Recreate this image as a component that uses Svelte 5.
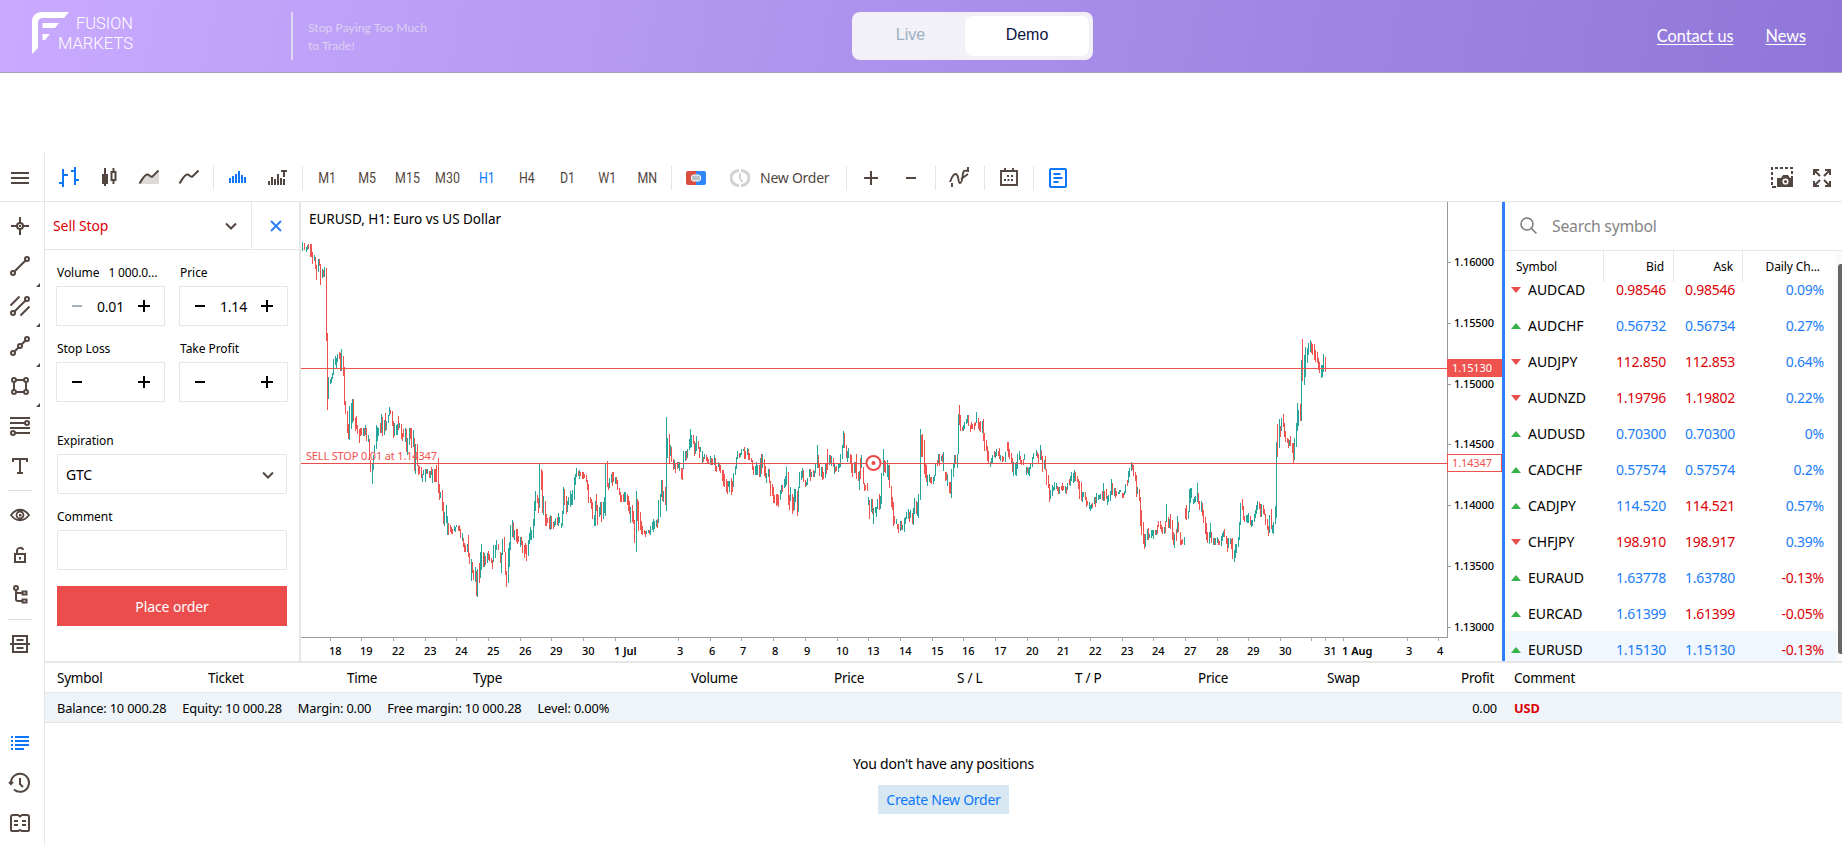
<script lang="ts">
    type Icon = { s?: string; f?: string; soft?: string; w?: number };

    // s = stroked path, f = filled path, soft = grey background shape
    const icons: Record<string, Icon> = {
        menu: { s: 'M3 7h18M3 12h18M3 17h18' },
        bars: { s: 'M6 3v18M2 17h4M6 9h5M18 1v18M14 5h4M18 14h4' },
        candles: { s: 'M8 2v18M16.5 2v3M16.5 15v3M14.5 6h4v8h-4z', f: 'M5 8h6v10H5z' },
        area: { s: 'M2.5 17.5c4-6 5-9 8-9 2 0 3 3 5 2l6-6', soft: 'M2 18 9 8.5l6 2L22 4v14z' },
        line: { s: 'M2.5 17.5c4-6 5-9 8-9 2 0 3 3 5 2l6-6' },
        volumes: { f: 'M3 12h2v5H3zM6 10h2v7H6zM9 8h2v9H9zM12 5h2v12h-2zM15 9h2v8h-2zM18 11h2v6h-2z' },
        ticks: { f: 'M2 15h2v4H2zM5 11h2v8H5zM8 13h2v6H8zM11 8h2v11h-2zM14 12h2v7h-2zM17 13h2v6h-2zM15 4h6v2h-2v5h-2V6h-2z' },
        plus: { s: 'M12 5v14M5 12h14' },
        minus: { s: 'M7 12h10' },
        indicators: { s: 'M2 16c2-6 5-10 7-7 2 2 1 8 3 8 3 0 2-10 4-12 1-1 3 0 5 0M4 21v-4M20 1v3M13 13l7-5', w: 1.9 },
        calendar: { s: 'M4 5h16v14H4zM8 2v4M16 2v4', f: 'M10 9h2v2h-2zM14 9h2v2h-2zM7 13h2v2H7zM10.500 13h2v2h-2zM14 13h2v2h-2z', w: 1.900 },
        list: { s: 'M5 3h14a1 1 0 0 1 1 1v16a1 1 0 0 1-1 1H5a1 1 0 0 1-1-1V4a1 1 0 0 1 1-1zM7.5 8h7M7.5 12h9M7.5 16h5' },
        expand: { s: 'M4 9V4h5M4 4l6 6M15 4h5v5M20 4l-6 6M4 15v5h5M4 20l6-6M20 15v5h-5M20 20l-6-6' },
        cross: { s: 'M12 3v6M12 15v6M3 12h6M15 12h6M15 12a3 3 0 1 1-6 0 3 3 0 0 1 6 0z', f: 'M11 11h2v2h-2z' },
        trend: { s: 'M6.5 17.5l11-11M21 5a2 2 0 1 1-4 0 2 2 0 0 1 4 0zM7 19a2 2 0 1 1-4 0 2 2 0 0 1 4 0z' },
        channel: { s: 'M6.5 17.5l11-11M21 5a2 2 0 1 1-4 0 2 2 0 0 1 4 0zM7 19a2 2 0 1 1-4 0 2 2 0 0 1 4 0zM2.5 11.5l9-9M12.5 21.5l9-9' },
        poly: { s: 'M6.5 17.5l4-4M13.5 10.5l4-4M21 5a2 2 0 1 1-4 0 2 2 0 0 1 4 0zM7 19a2 2 0 1 1-4 0 2 2 0 0 1 4 0zM14 12a2 2 0 1 1-4 0 2 2 0 0 1 4 0z' },
        shape: { s: 'M8 6h8M8 18h8M6 8v8M18 8v8M8 6a2 2 0 1 1-4 0 2 2 0 0 1 4 0zM20 6a2 2 0 1 1-4 0 2 2 0 0 1 4 0zM8 18a2 2 0 1 1-4 0 2 2 0 0 1 4 0zM20 18a2 2 0 1 1-4 0 2 2 0 0 1 4 0z' },
        fibo: { s: 'M2 4h20M2 9h15M2 14h20M7 19h15M21 9a2 2 0 1 1-4 0 2 2 0 0 1 4 0zM7 19a2 2 0 1 1-4 0 2 2 0 0 1 4 0z' },
        text: { s: 'M5 8V5h14v3M12 5v14M9 19h6' },
        eye: { s: 'M3 12c5-7 13-7 18 0-5 7-13 7-18 0zM15.5 12a3.5 3.5 0 1 1-7 0 3.5 3.5 0 0 1 7 0z', f: 'M11 11h2.500v2.500H11z', w: 1.8 },
        lock: { s: 'M7 11h10v8H7zM9 11V8c0-4 6-4 6-1', f: 'M11 14h2v2.500h-2z' },
        tree: { s: 'M8 7v9c0 2 1 2 2 2h4M8 10h7M10 5a2 2 0 1 1-4 0 2 2 0 0 1 4 0zM14.500 8.500h4v3h-4zM14.500 16.500h4v3h-4z' },
        template: { s: 'M5 11V4h14v7M2 12h20M5 13v7h14v-7M8.500 8h7M8.500 16h7' },
        positions: { f: 'M3 5h2v2H3zM7 5h14v2H7zM3 9h2v2H3zM7 9h14v2H7zM3 13h2v2H3zM7 13h14v2H7zM3 17h2v2H3zM7 17h9v2H7z' },
        history: { s: 'M3 12a9 9 0 1 1 3 6.500M1 11l2 2 2-2M12 7v6l3 3' },
        book: { s: 'M3 6a2 2 0 0 1 2-2h5l2 1.500L14 4h5a2 2 0 0 1 2 2v13a1 1 0 0 1-1 1h-6l-2-1-2 1H4a1 1 0 0 1-1-1zM6 10h4M6 14h4M14 10h4M14 14h4' }
    };

    const chartTypes = ['bars', 'candles', 'area', 'line'];
    const periods = ['M1', 'M5', 'M15', 'M30', 'H1', 'H4', 'D1', 'W1', 'MN'];
    const drawTools = ['cross', 'trend', 'channel', 'poly', 'shape', 'fibo', 'text'];
    const withMenu = ['trend', 'channel', 'poly', 'shape'];

    const symbols = [
        { name: 'AUDCAD', up: false, bid: '0.98546', ask: '0.98546', bidUp: false, askUp: false, change: '0.09%' },
        { name: 'AUDCHF', up: true, bid: '0.56732', ask: '0.56734', bidUp: true, askUp: true, change: '0.27%' },
        { name: 'AUDJPY', up: false, bid: '112.850', ask: '112.853', bidUp: false, askUp: false, change: '0.64%' },
        { name: 'AUDNZD', up: false, bid: '1.19796', ask: '1.19802', bidUp: false, askUp: false, change: '0.22%' },
        { name: 'AUDUSD', up: true, bid: '0.70300', ask: '0.70300', bidUp: true, askUp: true, change: '0%' },
        { name: 'CADCHF', up: true, bid: '0.57574', ask: '0.57574', bidUp: true, askUp: true, change: '0.2%' },
        { name: 'CADJPY', up: true, bid: '114.520', ask: '114.521', bidUp: true, askUp: false, change: '0.57%' },
        { name: 'CHFJPY', up: false, bid: '198.910', ask: '198.917', bidUp: false, askUp: false, change: '0.39%' },
        { name: 'EURAUD', up: true, bid: '1.63778', ask: '1.63780', bidUp: true, askUp: true, change: '-0.13%' },
        { name: 'EURCAD', up: true, bid: '1.61399', ask: '1.61399', bidUp: true, askUp: false, change: '-0.05%' },
        { name: 'EURUSD', up: true, bid: '1.15130', ask: '1.15130', bidUp: true, askUp: true, change: '-0.13%' }
    ];

    const columns = ['Symbol', 'Ticket', 'Time', 'Type', 'Volume', 'Price', 'S / L', 'T / P', 'Price', 'Swap', 'Profit', 'Comment'];
    const summary = ['Balance: 10 000.28', 'Equity: 10 000.28', 'Margin: 0.00', 'Free margin: 10 000.28', 'Level: 0.00%'];

    const prices = ['1.16000', '1.15500', '1.15000', '1.14500', '1.14000', '1.13500', '1.13000'];

    const days: [number, string][] = [
        [29, '18'], [60, '19'], [92, '22'], [124, '23'], [155, '24'], [187, '25'], [219, '26'], [250, '29'], [282, '30'], [314, '1 Jul'],
        [377, '3'], [409, '6'], [440, '7'], [472, '8'], [504, '9'], [536, '10'], [567, '13'], [599, '14'], [631, '15'], [662, '16'],
        [694, '17'], [726, '20'], [757, '21'], [789, '22'], [821, '23'], [852, '24'], [884, '27'], [916, '28'], [947, '29'], [979, '30'],
        [1010, ''], [1024, '31'], [1042, '1 Aug'], [1106, '3'], [1137, '4']
    ];

    // Hourly bars: direction + x,high,low in thirds of a pixel from the run's origin
    const runs = [
        {
            x: -1, y: -2,
            bars: 'g7,126,153 r12,130,152 g19,140,155 g22,136,150 r25,132,146 r31,132,171 r34,132,171 r37,156,192 g43,165,183 r46,170,205 r49,195,240 g55,178,218 r58,178,200 r61,192,255 g67,207,234 r70,210,232 g73,201,231 r79,204,423 r82,399,630 g85,531,597 g91,537,552 g94,531,549 g97,519,537 g100,477,525 g106,468,495 g109,474,504 g112,462,486 r118,456,477 r121,459,513 g124,447,513 r130,468,528 r133,501,615 r136,603,642 r142,633,699 r145,672,717 g148,618,720 g154,609,687 g157,597,669 r160,597,663 r166,654,693 r169,648,688 r172,675,702 r178,687,729 r181,684,708 r184,684,705 g190,684,708 r193,684,708 g196,675,705 r199,684,723 g205,705,726 r208,717,780 r211,780,816 g217,790,852 g220,765,810 g223,735,762 g229,675,747 g232,681,723 g235,684,708 r241,669,699 g244,642,699 r247,651,708 g253,660,705 r256,639,693 g259,663,690 g265,645,669 g268,621,648 r271,630,642 r277,633,678 r280,663,714 g283,669,708 g289,675,705 g292,672,705 r295,648,690 g298,669,684 r304,672,717 r307,699,723 r310,687,711 g316,684,726 r319,687,756 g322,714,765 g328,684,735 r331,684,717 r334,684,744 g340,690,741 r343,714,813 g346,732,822 r352,732,798 r355,795,825 r358,798,822 r364,801,834 g367,822,846 g370,810,825 g376,807,846 r379,807,822 g382,807,822 r388,813,834 g391,813,834 r394,801,825 g397,807,849 r403,807,846 r406,807,846 r409,795,846 r415,774,880 r418,852,900 g421,876,894 r427,870,933 r430,906,972 g433,936,978 g439,915,969 g442,948,1005 r445,969,1005 r451,975,996 r454,981,1002 r457,987,1002 g463,978,993 g466,981,996 g469,975,981 r475,978,993 r478,975,993 r481,987,1014 g487,999,1023 r490,1014,1041 r493,1029,1056 r496,1035,1056 g502,1032,1056 r505,1005,1071 r508,1059,1092 g514,1077,1143 r517,1086,1119 r520,1110,1140 g526,1101,1146 r529,1113,1188 g532,1107,1191 r538,1089,1149 g541,1056,1134 g544,1032,1110 r550,1056,1101 g553,1059,1101 r556,1068,1095 g562,1059,1089 r565,1053,1080 r568,1062,1083 r574,1074,1089 r577,1080,1107 g580,1035,1086 g586,1035,1074 g589,1020,1050 r595,1032,1050 r601,1056,1089 g604,1059,1119 g607,1017,1065 r613,1011,1056 r616,1056,1125 r619,1113,1161 g625,1044,1149 g628,1026,1101 g631,975,1050 g637,960,1011 r640,966,1014 g643,990,1020 r649,987,1026 r652,987,1032 r655,1008,1026 g661,1011,1041 r664,1011,1035 r667,1023,1059 r673,1035,1074 r676,1029,1062 r679,1035,1083 g685,1020,1068 g688,999,1032 g691,981,1020 g694,990,1020 g700,957,1014 g703,903,978 g706,873,933 r712,885,909 r715,894,939 g718,792,924 r724,807,870 r727,813,939 g730,888,945 r736,903,978 r739,942,978 r742,954,969 r748,951,987 g751,945,990 r754,948,987 r760,966,987 g763,963,981 g766,954,975 r772,951,975 g775,939,978 g778,951,969 g784,969,984 g787,933,978 g790,861,942 r793,867,915 r799,888,942 g802,903,936 g805,891,915 g811,873,921 g814,882,915 g817,870,915 g823,831,900 g826,822,855 g829,804,831 r835,813,828 g838,810,837 r841,816,828 r847,816,837 r850,816,837 r853,822,834 r859,825,846 r862,840,870 r865,852,909 r871,891,909 r874,897,927 r877,906,957 g883,945,978 g886,903,978 r889,882,933 r892,915,975 g898,921,951 g901,906,945 r904,906,966 g910,906,957 g913,891,939 g916,790,948 r922,783,861 r925,849,870 g928,834,864 g934,822,849 r937,816,858 r940,816,846 g946,831,852 r949,831,852 r952,840,870 r958,864,885 r961,876,906 r964,885,906 r970,882,906 g973,876,906 g976,876,906 r982,882,915 r985,888,933 r988,903,942 g991,921,969 r997,915,966 r1000,933,972 r1003,960,1029 g1009,873,1056 r1012,897,963 r1015,903,993 r1021,936,990 r1024,963,1002 r1027,978,1005 r1033,990,1002 r1036,993,1011 g1039,993,1002 g1045,990,999 r1048,990,1002 g1051,978,1005 g1057,966,990 g1060,957,996 g1063,963,987 g1069,960,981 r1072,957,984 g1075,900,969 g1081,882,951 g1084,840,891 r1087,840,903 g1090,873,906 r1096,861,915 g1099,651,933'
        },
        {
            x: 359, y: 178,
            bars: 'g22,175,235 r28,162,250 g31,195,228 r34,201,246 r40,237,270 g43,240,267 r46,249,279 r52,246,267 g55,246,264 g58,246,273 r64,264,297 r67,264,300 g70,213,267 g76,213,243 r79,213,240 g82,207,234 g88,177,210 g91,147,204 g94,165,201 r100,165,192 r103,183,228 g106,189,222 g109,168,213 r115,183,207 r118,201,234 g121,201,216 g127,213,249 r130,231,246 g133,222,237 r139,225,243 r142,231,249 r145,237,252 g151,228,255 r154,234,255 r157,237,255 g163,225,255 r166,234,273 r169,258,276 g175,246,261 r178,249,273 r181,255,279 r187,270,303 r190,270,318 r193,282,321 r199,297,336 r202,303,342 g205,303,321 g208,303,336 r214,294,345 r217,303,336 g220,279,321 g226,258,285 g229,231,267 g232,213,237 r238,219,234 g241,219,231 g244,207,225 g250,207,213 r253,201,237 r256,213,237 g262,204,225 r265,207,240 r268,219,240 r274,234,246 r277,240,270 r280,258,285 g286,258,285 g289,246,285 g292,255,285 r298,255,291 g301,234,291 r304,222,282 g307,222,264 r313,237,288 r316,258,294 g319,279,309 g325,267,291 r328,267,309 r331,303,348 r337,312,348 r340,321,369 r343,345,369 r349,342,378 r352,342,375 r355,345,381 g361,330,360 g364,315,342 r367,315,336 g373,297,324 g376,288,321 g379,261,315 r385,276,375 r388,345,390 g391,321,363 r397,342,402 r400,351,393 g403,327,390 g406,327,366 r412,333,408 g415,321,396 g418,276,324 g424,273,300 g427,264,294 r430,270,306 r436,300,321 g439,306,318 g442,294,315 g448,267,291 r451,267,303 g454,276,291 r460,270,291 g463,273,291 g466,252,279 g472,195,264 r475,225,264 r478,249,288 g484,261,291 r487,261,300 r490,276,297 g496,252,294 r499,249,282 r502,207,270 g508,225,255 r511,225,252 g514,228,258 r520,234,261 g523,252,282 r526,261,276 r529,258,273 g535,252,276 g538,249,264 g541,222,261 g547,195,237 g550,153,204 r553,159,204 r559,195,234 g562,213,246 g565,204,234 r571,222,249 r574,225,279 r577,249,291 g583,246,279 r586,246,279 r589,222,297 r595,276,303 g598,273,330 r601,234,297 g604,225,264 r610,261,312 r613,309,333 r616,315,330 r622,309,333 g625,351,375 r628,360,417 g634,357,396 r637,357,402 g640,384,432 g646,381,399 g649,381,411 g652,357,387 r658,342,390 g661,348,387 g664,279,372 g670,207,288 r673,240,276 r676,243,279 g682,240,291 g685,255,300 r688,255,324 r694,318,381 r697,351,390 r700,366,438 r703,408,432 g709,417,432 r712,432,447 r715,432,459 g721,423,453 r724,423,450 g727,435,450 g733,414,456 g736,411,432 g739,396,417 g745,387,417 r748,396,426 g751,390,414 r757,399,432 g760,384,435 g763,354,402 r769,363,402 g772,366,408 g775,342,414 g781,147,360 r784,165,231 r787,162,231 r793,180,282 r796,252,294 r799,255,306 g802,285,318 g808,282,306 r811,291,309 r814,291,312 g820,291,312 g823,285,303 g826,252,288 r832,240,258 g835,222,252 r838,222,258 g844,228,243 r847,222,246 g850,216,273 r856,276,303 r859,276,300 g862,282,318 r868,306,339 r871,306,342 g874,267,354 g880,252,291 g883,225,264 r886,225,252 g892,222,264 g895,102,222 r898,75,135 r901,105,153 r907,141,153 g910,135,153 g913,126,147 g919,117,132 g922,105,129 r925,105,138 r931,135,156 r934,126,147 r937,132,147 r943,129,150 r946,126,138 g949,96,129 r955,114,147 r958,126,153 r961,123,156 g967,123,159 r970,117,183 r973,159,213 r979,180,213 r982,198,243 r985,213,249 g991,246,261 g994,234,252 g997,225,249 r1003,213,231 g1006,216,234 g1009,207,228 r1015,213,228 r1018,204,237 g1021,225,243 r1027,228,246 r1030,231,243 g1036,216,246 r1042,186,213 r1045,186,231 r1048,207,237 r1054,219,252 r1057,234,276 g1060,246,288 g1066,252,285 g1069,246,288 g1072,222,267 g1078,213,240 r1081,228,249 r1084,240,255 r1090,237,255 g1093,222,240 g1099,261,285 r1102,261,279 g1105,264,285 g1108,261,288 g1111,249,267 g1117,231,261 g1120,219,237 g1129,210,228 r1132,216,234 r1135,222,249 g1141,195,240'
        },
        {
            x: 739, y: 178,
            bars: 'r4,210,240 r7,228,276 g13,240,267 r16,228,270 r19,267,315 r25,285,324 r28,312,366 g31,330,357 g37,315,348 g40,321,333 g43,306,330 g49,309,327 r52,318,333 r55,321,342 g58,321,342 r64,318,330 r67,309,333 r70,318,330 g76,318,339 r79,321,342 g82,309,330 r88,297,315 g91,288,318 g94,276,303 g100,279,309 g103,270,306 r106,276,303 r112,288,306 r115,297,327 r118,303,357 r124,306,363 g127,336,366 g130,336,351 r136,336,360 r139,351,381 r142,363,375 g148,366,387 g151,375,393 g154,372,387 r157,369,384 g163,351,372 r166,351,381 g169,339,369 g175,345,360 g178,345,357 g181,342,357 r187,333,360 g190,309,363 r193,333,363 r199,327,357 g202,348,375 g205,345,366 g211,333,363 g214,297,345 r217,309,345 g223,324,348 r226,324,354 r229,333,348 g235,336,342 g238,330,342 g241,330,336 r247,339,354 r250,339,354 g253,333,345 g256,312,339 r262,300,318 g265,273,309 g268,264,291 g274,247,273 r277,249,270 r280,255,288 r286,276,303 r289,285,351 g292,321,342 r298,327,363 r301,351,438 r304,390,465 r310,426,492 r313,462,507 g316,462,500 g322,447,480 r325,444,480 g328,462,474 g334,450,474 g337,450,468 g340,450,477 r346,450,465 g349,450,465 r352,435,462 r355,423,441 r361,423,447 r364,435,456 r367,441,462 g373,441,462 r376,423,459 g379,372,426 r385,411,444 g388,417,444 r391,402,447 r397,420,480 r400,456,495 g403,462,504 r409,447,483 g412,408,459 r415,426,456 r421,456,495 r424,480,495 r427,477,492 g433,471,495 r436,384,417 r439,375,420 g445,393,417 g448,327,396 g451,324,369 g454,324,354 g460,357,372 g463,351,369 g466,348,366 g472,309,366 r475,339,372 r478,363,390 g484,363,396 r487,369,408 r490,390,429 r496,411,462 r499,429,480 r502,456,489 g508,456,492 g511,429,474 r514,456,489 g520,474,495 r523,474,495 g526,474,495 g532,471,489 r535,477,495 r538,483,495 g544,468,498 g547,459,483 g550,453,471 r553,447,471 r559,468,492 r562,474,516 g565,474,504 g571,474,492 r574,477,507 r577,474,537 g583,510,546 g586,492,534 g589,492,519 g595,471,501 g598,426,480 g601,369,435 r607,357,390 r610,378,420 r613,408,426 g619,405,426 g622,405,429 g625,399,429 r631,408,435 g634,420,441 g637,420,438 g643,402,426 g646,390,414 g649,375,402 g652,363,390 r658,366,387 r661,372,411 g664,372,411 r670,375,402 r673,387,405 r676,402,435 r682,417,450 r685,438,468 g688,405,459 r694,387,447 g697,435,459 g700,426,462 g706,378,432 g709,186,414 r712,132,231 g718,117,204 r721,138,171 g724,114,153 r730,102,141 r733,129,171 r736,153,186 r742,174,189 r745,177,204 g748,180,198 r751,168,198 r757,189,219 r760,189,249 g763,174,240 g769,129,201 g772,69,153 g775,90,138 r781,72,123 g784,-60,123 r787,-124,3 g793,-75,14 g796,-100,-10 g802,-95,-50 g805,-112,-75 g811,-120,-85 r814,-114,-82 r817,-108,-75 r823,-108,-60 r826,-90,-54 r832,-84,-50 r835,-66,-30 r838,-54,-20 g844,-45,-6 g847,-45,-9 g850,-78,-24 r856,-70,-24'
        }
    ];

    const candles = runs.flatMap((run) =>
        run.bars.split(' ').map((bar) => {
            const [x, high, low] = bar.slice(1).split(',').map(Number);
            return {
                up: bar[0] === 'g',
                x: run.x + Math.floor(x / 3),
                y: run.y + Math.round(high / 3),
                h: Math.max(1, Math.round((low - high) / 3))
            };
        })
    );
</script>

{#snippet icon(name: string)}
    {@const i = icons[name]}
    <svg class="icon" viewBox="0 0 24 24" width="24" height="24" aria-hidden="true">
        {#if i.soft}<path d={i.soft} fill="#dcdbda" />{/if}
        {#if i.s}<path d={i.s} fill="none" stroke="currentColor" stroke-width={i.w ?? 2} />{/if}
        {#if i.f}<path d={i.f} fill="currentColor" />{/if}
    </svg>
{/snippet}

{#snippet stepper(value: string, disabled: boolean)}
    <div class="stepper">
        <svg class:disabled viewBox="0 0 12 12" width="12" height="12"><path d="M1 6h10" /></svg>
        <span>{value}</span>
        <svg viewBox="0 0 12 12" width="12" height="12"><path d="M0 6h12M6 0v12" /></svg>
    </div>
{/snippet}

{#snippet chevron()}
    <svg class="chevron" viewBox="0 0 12 8" width="12" height="8"><path d="M1 1.500l5 5 5-5" /></svg>
{/snippet}

<div class="app">
    <header>
        <svg class="logo" viewBox="0 0 110 48" width="110" height="48">
            <path d="M0 42V9a9 9 0 0 1 9-9h28l-5 6H11q-5 0-5 5v25z" />
            <path d="M10.500 11H27l-4 5H10.500zM10.500 22H18l-5 6h-2.500z" />
            <text x="44" y="17" textLength="57" lengthAdjust="spacingAndGlyphs">FUSION</text>
            <text x="26" y="37" textLength="75" lengthAdjust="spacingAndGlyphs">MARKETS</text>
        </svg>
        <p class="tagline">Stop Paying Too Much<br />to Trade!</p>
        <div class="switch">
            <span>Live</span>
            <span class="on">Demo</span>
        </div>
        <nav>
            <a href="#contact">Contact us</a>
            <a href="#news">News</a>
        </nav>
    </header>

    <div class="toolbar">
        <div class="burger">{@render icon('menu')}</div>
        <div class="tools">
            {#each chartTypes as t}
                <div class="tool" class:active={t === 'bars'}>{@render icon(t)}</div>
            {/each}
            <i class="sep"></i>
            <div class="tool active">{@render icon('volumes')}</div>
            <div class="tool">{@render icon('ticks')}</div>
            <i class="sep"></i>
            {#each periods as p}
                <div class="tool period" class:active={p === 'H1'}><span>{p}</span></div>
            {/each}
            <i class="sep"></i>
            <div class="tool">
                <svg viewBox="0 0 20 14" width="20" height="14">
                    <path d="M2 0h8v14H2a2 2 0 0 1-2-2V2a2 2 0 0 1 2-2z" fill="#db4f43" />
                    <path d="M10 0h8a2 2 0 0 1 2 2v10a2 2 0 0 1-2 2h-8z" fill="#2f86f6" />
                    <rect x="5.500" y="4" width="9" height="6" rx="2" fill="#b5c3cb" stroke="#fff" />
                </svg>
            </div>
            <div class="new-order">
                <svg viewBox="0 0 20 18" width="20" height="18">
                    <path d="M9 1.500a8 7.500 0 0 0 0 15M11 1.500a8 7.500 0 0 1 0 15" />
                    <path class="hands" d="M10 4.500v5l2.500 3.500" />
                </svg>
                <span>New Order</span>
            </div>
            <i class="sep"></i>
            <div class="tool">{@render icon('plus')}</div>
            <div class="tool">{@render icon('minus')}</div>
            <i class="sep"></i>
            <div class="tool">{@render icon('indicators')}</div>
            <i class="sep"></i>
            <div class="tool">{@render icon('calendar')}</div>
            <i class="sep"></i>
            <div class="tool active">{@render icon('list')}</div>
        </div>
        <div class="tools right">
            <div class="tool">
                <svg viewBox="0 0 24 24" width="24" height="24">
                    <path d="M2 19V2h20v10" fill="none" stroke="currentColor" stroke-width="2" stroke-dasharray="3 2" />
                    <path d="M2 21h4" stroke="currentColor" stroke-width="2" />
                    <path d="M7 12h4l2-3h5l2 3h3v9H7z" fill="currentColor" />
                    <circle cx="15.500" cy="15.500" r="2.300" fill="none" stroke="#fff" stroke-width="1.600" />
                </svg>
            </div>
            <div class="tool">{@render icon('expand')}</div>
        </div>
    </div>

    <div class="terminal">
        <aside class="side">
            {#each drawTools as t}
                <div class="tool" class:more={withMenu.includes(t)}>{@render icon(t)}</div>
            {/each}
            <i class="rule"></i>
            <div class="tool">{@render icon('eye')}</div>
            <div class="tool">{@render icon('lock')}</div>
            <div class="tool">{@render icon('tree')}</div>
            <i class="rule"></i>
            <div class="tool">{@render icon('template')}</div>
            <div class="bottom">
                <div class="tool active">{@render icon('positions')}</div>
                <div class="tool">{@render icon('history')}</div>
                <div class="tool">{@render icon('book')}</div>
            </div>
        </aside>

        <div class="main">
            <div class="upper">
                <section class="order">
                    <div class="order-head">
                        <div class="order-type"><span>Sell Stop</span>{@render chevron()}</div>
                        <div class="close">
                            <svg viewBox="0 0 12 12" width="12" height="12"><path d="M1 1l10 10M11 1L1 11" /></svg>
                        </div>
                    </div>
                    <div class="form">
                        <div class="pair">
                            <div class="field">
                                <div class="label"><span>Volume</span><span class="lots">1 000.0…</span></div>
                                {@render stepper('0.01', true)}
                            </div>
                            <div class="field">
                                <div class="label">Price</div>
                                {@render stepper('1.14', false)}
                            </div>
                        </div>
                        <div class="pair second">
                            <div class="field">
                                <div class="label">Stop Loss</div>
                                {@render stepper('', false)}
                            </div>
                            <div class="field">
                                <div class="label">Take Profit</div>
                                {@render stepper('', false)}
                            </div>
                        </div>
                        <div class="wide expiration">
                            <div class="label">Expiration</div>
                            <div class="box"><span>GTC</span>{@render chevron()}</div>
                        </div>
                        <div class="wide comment">
                            <div class="label">Comment</div>
                            <div class="box"></div>
                        </div>
                        <button class="place">Place order</button>
                    </div>
                </section>

                <svg class="chart" viewBox="0 0 1201 459" width="1201" height="459">
                    <g shape-rendering="crispEdges">
                        {#each candles as c}
                            <rect x={c.x} y={c.y} width="1" height={c.h} fill={c.up ? '#26a69a' : '#ef5350'} />
                        {/each}
                        <rect x="0" y="166" width="1146" height="1" fill="#ef5350" />
                        <rect x="0" y="261" width="1146" height="1" fill="#e94b4b" />
                        <rect x="1146" y="0" width="1" height="436" fill="#999" />
                        <rect x="0" y="435" width="1147" height="1" fill="#999" />
                        {#each days as [x]}
                            <rect {x} y="436" width="1" height="3" fill="#aaa" />
                        {/each}
                        {#each prices as _, i}
                            <rect x="1147" y={60 + Math.round(i * 60.8)} width="3" height="1" fill="#999" />
                        {/each}
                    </g>
                    <text class="title" x="8" y="22" textLength="192">EURUSD, H1: Euro vs US Dollar</text>
                    <text class="order-label" x="5" y="258" textLength="131">SELL STOP 0.01 at 1.14347</text>
                    <circle cx="572.500" cy="261" r="7" fill="#fff" stroke="#e94b4b" stroke-width="2" />
                    <circle cx="572.500" cy="261" r="2" fill="#e94b4b" />
                    {#each prices as p, i}
                        <text class="tick" x="1153" y={64 + Math.round(i * 60.8)} textLength="40">{p}</text>
                    {/each}
                    {#each days as [x, label]}
                        <text class="tick" class:month={label.length > 2} x={x - 1} y="453">{label}</text>
                    {/each}
                    <rect x="1146" y="157" width="55" height="18" fill="#ef5350" />
                    <text class="badge" x="1151" y="170" textLength="40">1.15130</text>
                    <rect x="1146.500" y="252.500" width="54" height="17" fill="#fff" stroke="#ef5350" />
                    <text class="badge hollow" x="1151" y="265" textLength="40">1.14347</text>
                </svg>

                <section class="market">
                    <div class="search">
                        <svg viewBox="0 0 18 18" width="18" height="18"><circle cx="7" cy="7" r="6" /><path d="M11.500 11.500l5 5" /></svg>
                        <span>Search symbol</span>
                    </div>
                    <div class="quotes">
                        <div class="table">
                            <div class="q-head">
                                <span>Symbol</span><span>Bid</span><span>Ask</span><span>Daily Ch...</span>
                            </div>
                            <div class="q-rows">
                                {#each symbols as s}
                                    <div class="q-row" class:selected={s.name === 'EURUSD'}>
                                        <span class="arrow" class:down={!s.up}></span>
                                        <span class="name">{s.name}</span>
                                        <span class="num" class:red={!s.bidUp}>{s.bid}</span>
                                        <span class="num" class:red={!s.askUp}>{s.ask}</span>
                                        <span class="num" class:red={s.change.startsWith('-')}>{s.change}</span>
                                    </div>
                                {/each}
                            </div>
                        </div>
                        <div class="track"><div class="thumb"></div></div>
                    </div>
                </section>
            </div>

            <section class="positions">
                <div class="p-head">
                    {#each columns as c}<span>{c}</span>{/each}
                </div>
                <div class="p-summary">
                    <div class="sums">{#each summary as s}<span>{s}</span>{/each}</div>
                    <span class="profit">0.00</span>
                    <b>USD</b>
                </div>
                <div class="empty">
                    <p>You don't have any positions</p>
                    <button>Create New Order</button>
                </div>
            </section>
        </div>
    </div>
</div>

<style>
    :global(body){ margin: 0; background: #fff; }
    .app{
        --line:#e6e6e6;
        --icon:#534641;
        --blue:#0d76fb;
        --red:#dc0005;
        width: 1842px; height: 845px; overflow: hidden;
        display: flex; flex-direction: column;
        font: 14px/18px "Noto Sans", sans-serif;
        letter-spacing: -.25px;
        color: #000;
    }
    *{ box-sizing: border-box; }
    svg{ display: block; flex: none; }

    /* Brand bar */
    header{
        height: 73px; flex: none; margin-bottom: 80px;
        display: flex; align-items: flex-start; padding-top: 12px;
        border-bottom: 1px solid #aaa3b8;
        background: linear-gradient(100deg, #c9aaff 0%, #ab91ec 50%, #9076d8 100%);
        letter-spacing: 0;
    }
    .logo{ margin-left: 32px; fill: #fff; }
    .logo text{ font: 300 17px Roboto, sans-serif; }
    .tagline{
        margin: 0 0 0 149px; height: 48px; width: 200px; padding: 7px 0 0 15px;
        border-left: 2px solid #dcd6f4; color: #dbd0f3;
        font: 12.200px/18px Lato, sans-serif;
    }
    .switch{
        margin-left: 361px; width: 241px; height: 48px; padding: 4px;
        display: flex; border-radius: 8px; background: #f2f1f7;
        font: 16px/38px "Liberation Sans", sans-serif; text-align: center;
    }
    .switch span{ width: 109px; height: 40px; color: #9cb0c2; }
    .switch .on{ width: 124px; border-radius: 8px; background: #fff; color: #0c1440; }
    nav{ margin: 13px 36px 0 auto; display: flex; gap: 32px; }
    nav a{ color: #fff; font: 16.300px/22px Lato, sans-serif; text-underline-offset: 2px; }

    /* Toolbar */
    .toolbar{
        height: 49px; flex: none; display: flex;
        border-bottom: 1px solid var(--line); color: var(--icon);
    }
    .burger{
        width: 45px; padding: 13px 0 0 8px; border-right: 1px solid var(--line);
    }
    .tools{ display: flex; align-items: center; padding: 2px 0 0 4px; }
    .tools.right{ margin-left: auto; }
    .tool{
        width: 40px; height: 40px; flex: none;
        display: flex; align-items: center; justify-content: center; color: var(--icon);
    }
    .tool.active{ color: var(--blue); }
    .period span{ font: 15.5px/20px Roboto, sans-serif; letter-spacing: 0; transform: scaleX(.8); }
    .sep{ width: 1px; height: 24px; margin: 0 4px; background: var(--line); }
    .new-order{ width: 126px; padding-left: 14px; display: flex; align-items: center; gap: 10px; }
    .new-order svg path{ fill: none; stroke: #d2d2d2; stroke-width: 3; }
    .new-order svg .hands{ stroke-width: 2; }

    .terminal{ flex: 1; min-height: 0; display: flex; }

    /* Left rail */
    .side{
        width: 45px; padding: 4px 4px 2px 0; display: flex; flex-direction: column; align-items: center;
        border-right: 1px solid var(--line);
    }
    .side .more{ position: relative; }
    .side .more::after{
        content: ''; position: absolute; right: 0; top: 37px;
        border-left: 4px solid transparent; border-bottom: 4px solid var(--icon);
    }
    .rule{ width: 24px; height: 1px; margin: 4px 0; background: #ddd; }
    .bottom{ margin-top: auto; }

    .main{ flex: 1; min-width: 0; display: flex; flex-direction: column; }
    .upper{ height: 461px; flex: none; display: flex; border-bottom: 2px solid var(--line); }

    /* Order form */
    .order{ width: 256px; flex: none; border-right: 2px solid var(--line); }
    .order-head{ height: 48px; display: flex; border-bottom: 1px solid var(--line); }
    .order-type{
        flex: 1; display: flex; align-items: center; justify-content: space-between;
        padding: 0 14px 0 8px; color: var(--red); letter-spacing: -.1px;
    }
    .order-type .chevron, .chevron{ color: var(--icon); }
    .close{
        width: 48px; border-left: 1px solid var(--line);
        display: flex; align-items: center; justify-content: center;
    }
    .close path{ stroke: #2f80f8; stroke-width: 2; }
    .chevron path{ fill: none; stroke: currentColor; stroke-width: 2; }
    .form{ padding: 14px 12px 0 11px; }
    .pair{ display: flex; gap: 14px; margin-right: -1px; }
    .second{ margin-top: 14px; }
    .field{ width: 109px; }
    .label{
        height: 22px; padding-left: 1px; font-size: 12px; line-height: 18px; letter-spacing: -.05px;
        display: flex; gap: 9px; white-space: nowrap;
    }
    .lots{ letter-spacing: -.150px; }
    .stepper{
        height: 40px; border: 1px solid var(--line); padding: 0 14px 0 14px;
        display: flex; align-items: center; justify-content: space-between;
    }
    .stepper span{ padding-top: 1px; }
    .stepper path{ stroke: #000; stroke-width: 2; }
    .stepper .disabled path{ stroke: #a3b1bd; }
    .wide{ padding-left: 1px; }
    .wide .label{ padding-left: 0; height: 22px; }
    .expiration{ margin-top: 30px; }
    .comment{ margin-top: 14px; }
    .box{
        height: 40px; padding: 1px 12px 0 8px; border: 1px solid var(--line); border-radius: 2px;
        display: flex; align-items: center; justify-content: space-between;
    }
    button{ border: 0; padding: 0; font: inherit; letter-spacing: inherit; }
    .place{ display: block; width: 230px; height: 40px; margin: 16px 0 0 1px; padding-top: 1px; background: #eb4d4d; color: #fff; letter-spacing: -.100px; }

    /* Chart */
    .chart{ letter-spacing: 0; }
    .title{ font-size: 13.500px; }
    .order-label{ font-size: 11px; fill: #ef5350; }
    .tick{ font-size: 11px; font-weight: 500; }
    .month{ font-weight: 600; }
    .badge{ font-size: 11px; fill: #fff; }
    .hollow{ fill: #ef5350; }

    /* Market watch */
    .market{ flex: 1; border-left: 3px solid #2f80fb; display: flex; flex-direction: column; }
    .search{
        height: 49px; flex: none; display: flex; align-items: center; gap: 14px; padding-left: 15px;
        border-bottom: 1px solid var(--line); font-size: 15.800px; color: #858585;
    }
    .search svg{ fill: none; stroke: #777; stroke-width: 1.500; }
    .quotes{ flex: 1; min-height: 0; display: flex; }
    .table{ flex: 1; display: flex; flex-direction: column; overflow: hidden; }
    .q-head{
        height: 30px; flex: none; display: grid; grid-template-columns: 99px 70px 69px 1fr;
        font-size: 12px; line-height: 31px; text-align: right; letter-spacing: -.1px;
    }
    .q-head span{ padding-right: 9px; border-right: 1px solid var(--line); }
    .q-head span:first-child{ text-align: left; padding-left: 11px; }
    .q-head span:last-child{ border: 0; padding-right: 16px; }
    .q-rows{ flex: 1; min-height: 0; margin-top: -10px; }
    .q-row{
        height: 36px; display: grid; align-items: center;
        grid-template-columns: 23px 68px 70px 69px 89px; line-height: 38px;
    }
    .selected{ background: #f0f7fe; }
    .arrow{ margin: -1px 0 0 6px; width: 0; border: 5px solid transparent; border-top: 0; border-bottom: 6px solid #37b34a; }
    .down{ border-bottom: 0; border-top: 6px solid #eb4d4d; }
    .name{ letter-spacing: -.050px; }
    .num{ text-align: right; color: #1a7cfa; }
    .num.red{ color: var(--red); }
    .track{ width: 6px; padding: 13px 0 0 2px; background: #fafafa; }
    .thumb{ height: 390px; border-radius: 3px 0 0 3px; background: #666; }

    /* Positions */
    .positions{ flex: 1; display: flex; flex-direction: column; }
    .p-head{
        height: 30px; padding-left: 12px; font-size: 13.500px; line-height: 30px; border-bottom: 1px solid var(--line);
        display: grid; grid-template-columns: 151px 139px 126px 218px 143px 123px 118px 123px 129px 134px 53px 1fr;
    }
    .p-summary{
        height: 30px; padding-left: 12px; line-height: 31px; font-size: 12.800px; letter-spacing: -.150px;
        display: flex; background: #eff4f9; border-bottom: 1px solid var(--line);
    }
    .sums{ width: 1404px; display: flex; gap: 16px; }
    .profit{ width: 36px; text-align: right; }
    .p-summary b{ margin-left: 17px; color: var(--red); }
    .empty{ display: flex; flex-direction: column; align-items: center; padding-top: 32px; width: 1797px; }
    .empty p{ margin: 0 0 12px; }
    .empty button{ width: 131px; height: 29px; background: #d8e8f3; color: var(--blue); }
</style>
